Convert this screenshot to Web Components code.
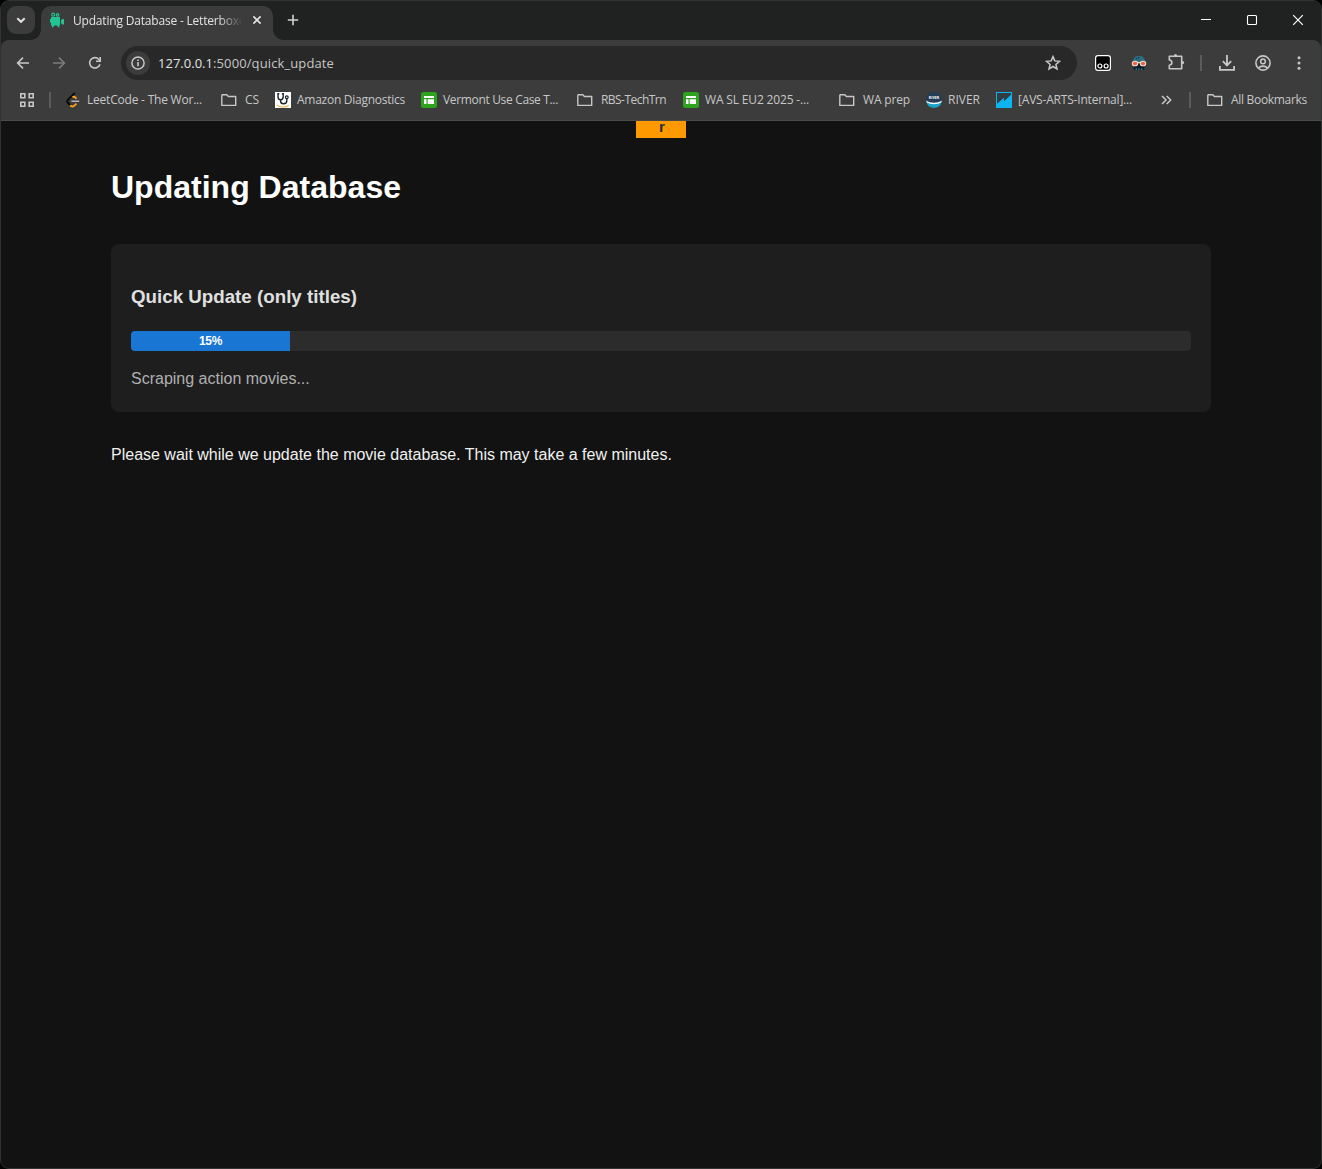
<!DOCTYPE html>
<html lang="en">
<head>
<meta charset="utf-8">
<title>Updating Database - Letterboxd</title>
<style>
html,body{margin:0;height:100%;background:#000;overflow:hidden}
</style>
</head>
<body>
<browser-window>
  <tab-strip slot="chrome"></tab-strip>
  <nav-bar slot="chrome"></nav-bar>
  <bookmarks-bar slot="chrome"></bookmarks-bar>
  <update-page></update-page>
</browser-window>
<script>
const svg=(w,h,vb,body)=>`<svg width="${w}" height="${h}" viewBox="${vb}" fill="none" style="display:block">${body}</svg>`;
const s16=b=>svg(16,16,'0 0 16 16',b);
const sheet='<rect width="16" height="16" rx="2.5" fill="#2da31e"/><path d="M3 4h10v2H3zM3 7.3h2.5V12H3zM6.7 7.3H13V12H6.7z" fill="#fff"/>';
const ICONS={
 chevron:s16('<path d="M4.3 6.2 8 9.8l3.7-3.6" stroke="#e3e3e3" stroke-width="1.9"/>'),
 camera:s16('<circle cx="4.200" cy="2.700" r="1.500" stroke="#22c493" stroke-width="1.200"/><circle cx="8.600" cy="2.900" r="1.200" stroke="#22c493" stroke-width="1.200"/><path d="M2 5h9v8.500H2zM3.500 13h1.800l-.8 2.300H2.700zM8 13h1.600l1 2.300H8.800zM1 7h1.500v3.500H1z" fill="#22c493"/><path d="m12 8.300 1.500-1.300H15v5.500h-1.500L12 11z" fill="#22c493"/>'),
 close:s16('<path d="m4.4 4.4 7.2 7.2M11.6 4.4l-7.2 7.2" stroke="#e3e3e3" stroke-width="1.6"/>'),
 plus:s16('<path d="M8 2.8v10.4M2.8 8h10.4" stroke="#d2d2d2" stroke-width="1.6"/>'),
 min:s16('<path d="M3 7.5h10" stroke="#fff"/>'),
 max:s16('<rect x="3.5" y="3.5" width="9" height="9" rx="1" stroke="#fff" stroke-width="1.1"/>'),
 winclose:s16('<path d="m3.2 3.2 9.6 9.6M12.8 3.2l-9.6 9.6" stroke="#fff" stroke-width="1.2"/>'),
 back:s16('<path d="M14 8H3M8 2.6 2.6 8 8 13.4" stroke="#c7c7c7" stroke-width="1.6"/>'),
 forward:s16('<path d="M2 8h11M8 2.6 13.4 8 8 13.4" stroke="#7c7c7c" stroke-width="1.6"/>'),
 reload:s16('<path d="M12.9 9.2A5.2 5.2 0 1 1 11.7 4.3L13.2 5.8" stroke="#c7c7c7" stroke-width="1.6"/><path d="M14 2v5H9V5.400h3.400V2z" fill="#c7c7c7"/>'),
 info:s16('<circle cx="8" cy="8" r="6.1" stroke="#c7c7c7" stroke-width="1.5"/><path d="M7.2 7.1h1.6v4.2H7.2zM7.2 4.4h1.6V6H7.2z" fill="#c7c7c7"/>'),
 star:s16('<path d="m8 1.6 1.8 4.3 4.7.4-3.6 3.1 1.1 4.6L8 11.5 4 14l1.1-4.6-3.6-3.1 4.7-.4z" stroke="#c7c7c7" stroke-width="1.5"/>'),
 tamper:s16('<rect x=".6" y=".6" width="14.8" height="14.8" rx="2.4" fill="#000" stroke="#fff" stroke-width="1.2"/><circle cx="4.9" cy="11" r="2" stroke="#fff" stroke-width="1.2"/><circle cx="11.1" cy="11" r="2" stroke="#fff" stroke-width="1.2"/>'),
 goggles:s16('<path d="M1.500 8.500C1.500 4 4 .8 8 .8s6.500 3.200 6.500 7.700z" fill="#2c6f82"/><path d="M7 2.2h1.4v1H7zM5 3h1v1H5z" fill="#122a35"/><path d="M2.2 9h11.600l-.8 6H3z" fill="#101d27"/><path d="M4.500 13.300h1.500V15H4.500zM7.200 13.300h1.500V15H7.200zM10 13.300h1.500V15H10z" fill="#257186"/><ellipse cx="4" cy="8.500" rx="2.700" ry="2.300" fill="#e8623f" stroke="#f5d9cf" stroke-width="1.100"/><ellipse cx="12" cy="8.500" rx="2.700" ry="2.300" fill="#e8623f" stroke="#f5d9cf" stroke-width="1.100"/><path d="M6.500 7.100h3v1h-3z" fill="#f5d9cf"/>'),
 puzzle:svg(18,18,'0 0 18 18','<path d="M2.3 3.3h12.4v12.4H2.3v-3.5c1.6-.1 2.6-1 2.6-2.6s-1-2.5-2.6-2.6z" stroke="#c7c7c7" stroke-width="1.6" stroke-linejoin="round"/><path d="M7 3V2.4a1.5 1.5 0 0 1 3 0V3zM15 7.9h.6a1.6 1.6 0 0 1 0 3.2H15z" fill="#c7c7c7"/>'),
 download:s16('<path d="M8 0v9.800M3.800 6.200 8 10.400l4.200-4.200M.9 11v3.900h14.200V11" stroke="#c7c7c7" stroke-width="1.800"/>'),
 profile:s16('<circle cx="8" cy="8" r="7.1" stroke="#c7c7c7" stroke-width="1.6"/><circle cx="8" cy="6.4" r="2.3" stroke="#c7c7c7" stroke-width="1.5"/><path d="M3.4 13.1c2.5-2.6 6.7-2.6 9.2 0" stroke="#c7c7c7" stroke-width="1.6"/>'),
 dots:s16('<circle cx="8" cy="2.8" r="1.5" fill="#c7c7c7"/><circle cx="8" cy="8" r="1.5" fill="#c7c7c7"/><circle cx="8" cy="13.2" r="1.5" fill="#c7c7c7"/>'),
 grid:s16('<path d="M1.8 1.8h4v4h-4zM10.2 1.8h4v4h-4zM1.8 10.2h4v4h-4zM10.2 10.2h4v4h-4z" stroke="#c7c7c7" stroke-width="1.6"/>'),
 leet:s16('<path d="M9.8 1 3 7.6c-1 1-1 2.2 0 3.2l1 1" stroke="#080808" stroke-width="1.9"/><path d="M7.500 5.200c1-.6 2-.4 2.900.3l1.100 1.100M5 13.200c1.500 1.400 3.500 1.400 4.900 0l1.600-1.600" stroke="#f6a01b" stroke-width="1.900"/><path d="m3.200 11 2 2.200" stroke="#080808" stroke-width="1.900"/><path d="M6.4 9.2h7.8" stroke="#b3b3b3" stroke-width="1.6"/>'),
 folder:s16('<path d="M1.3 2.8h4.5l1.6 1.7h7.3v8.9H.8V3.3z" stroke="#c7c7c7" stroke-width="1.4" stroke-linejoin="round"/>'),
 steth:s16('<path fill="#fff" d="M0 0h16v16H0z"/><path d="M4.300 1.700H3v2.800c0 2 1.100 3.200 2.600 3.200s2.600-1.200 2.600-3.200V1.700H6.900M5.600 7.700v1.200c0 1.900 1.100 2.800 2.900 2.800s3.300-1 3.300-3V6.500" stroke="#1b232d" stroke-width="1.400"/><circle cx="11.8" cy="5.200" r="1.400" stroke="#1b232d" stroke-width="1.200"/><path d="M1.800 13.300c3.500 2 8.500 2 12 .1" stroke="#efb75b" stroke-width="1.200"/>'),
 sheet:s16(sheet),
 river:s16('<circle cx="8" cy="8" r="8" fill="#233d56"/><path d="M.1 8.600c4.500 3 11.300 3 15.800 0A8 8 0 0 1 .1 8.600z" fill="#fff"/><path d="M.4 10.200c4.400 2.600 10.800 2.600 15.200 0A8 8 0 0 1 .4 10.200z" fill="#18a4c8"/><text x="8" y="6.800" fill="#fff" font-family="Open Sans" font-size="3.600" font-weight="700" text-anchor="middle">RIVER</text>'),
 avs:s16('<path fill="#0eb4f2" d="M0 0h16v16H0z"/><path d="M1 1h14v1.700L8 9.300V5.800L1 11.700z" fill="#333c40"/>'),
 more:s16('<path d="m4 4 4 4-4 4M8.700 4l4 4-4 4" stroke="#c7c7c7" stroke-width="1.500"/>')
};
const define=(name,html,ready)=>customElements.define(name,class extends HTMLElement{
  connectedCallback(){
    if(!this.shadowRoot)this.attachShadow({mode:'open'});
    this.shadowRoot.innerHTML=typeof html==='function'?html(this):html;
    if(ready)ready(this,this.shadowRoot);
  }
});
define('ui-icon',e=>`<style>:host{display:block;flex:none}</style>${ICONS[e.getAttribute('name')]}`);
/* A label spaced to fill the width given in its w attribute. */
define('fit-label',e=>`<style>:host{display:block;flex:none;white-space:pre;width:${e.getAttribute('w')}px}span{display:inline-block}</style><span>${e.getAttribute('text')}</span>`,(e,r)=>{
  const s=r.querySelector('span'),n=s.textContent.length;
  s.style.letterSpacing=((+e.getAttribute('w')-s.getBoundingClientRect().width)/n)+'px';
});
define('browser-window',`<style>:host{display:flex;flex-direction:column;box-sizing:border-box;width:1322px;height:1169px;border:1px solid #303332;border-radius:9px;background:#121212;overflow:hidden}
header{background:#202221}</style><header><slot name="chrome"></slot></header><slot></slot>`);
define('tab-strip',`<style>:host{display:flex;height:39px;background:#202221;font:12px/16px "Open Sans",sans-serif;color:#e3e3e3}
.search{display:flex;align-items:center;justify-content:center;width:28px;height:28px;margin:5px 0 0 6px;border-radius:9px;background:#3c3c3c}
.tab{position:relative;display:flex;align-items:center;box-sizing:border-box;width:232px;height:34px;margin:5px 0 0 6px;padding:0 8px 6px;border-radius:10px 10px 0 0;background:#3c3c3c}
.tab:before,.tab:after{content:"";position:absolute;bottom:0;width:10px;height:10px}
.tab:before{left:-10px;background:radial-gradient(circle at 0 0,transparent 9.500px,#3c3c3c 10px)}
.tab:after{right:-10px;background:radial-gradient(circle at 100% 0,transparent 9.500px,#3c3c3c 10px)}
.title{width:168px;margin-left:8px;padding-top:2px;overflow:hidden;-webkit-mask:linear-gradient(90deg,#000 145px,transparent 170px)}
.x{margin-left:8px}.new{margin:11px 0 0 12px}.controls{display:flex;gap:30px;margin:11px 15px 0 auto}</style>
<div class="search"><ui-icon name="chevron"></ui-icon></div>
<div class="tab"><ui-icon name="camera"></ui-icon><div class="title"><fit-label w="173" text="Updating Database - Letterboxd"></fit-label></div><ui-icon class="x" name="close"></ui-icon></div>
<ui-icon class="new" name="plus"></ui-icon>
<div class="controls"><ui-icon name="min"></ui-icon><ui-icon name="max"></ui-icon><ui-icon name="winclose"></ui-icon></div>`);
define('nav-bar',`<style>:host{display:flex;align-items:center;box-sizing:border-box;height:41px;padding:5px 14px 1px;background:#3c3c3c;border-radius:8px 8px 0 0;font:13px/18px "Open Sans",sans-serif;color:#e3e3e3}
.nav{display:flex;gap:20px}
.omni{display:flex;align-items:center;box-sizing:border-box;width:956px;height:34px;margin-left:18px;padding:0 16px 0 5px;border-radius:17px;background:#282828}
.site{display:flex;align-items:center;justify-content:center;width:24px;height:24px;border-radius:12px;background:#3c3c3c;margin-right:8px}
.path{color:#c7c7c7}.omni .star{margin-left:auto}
.ext{display:flex;gap:20px;margin-left:18px}.ext .p{margin:-2px 0 0 0}
i{width:2px;height:16px;margin:0 16px 0 15px;background:#5b5b5b}.right{display:flex;gap:20px;margin-left:1px}</style>
<div class="nav"><ui-icon name="back"></ui-icon><ui-icon name="forward"></ui-icon><ui-icon name="reload"></ui-icon></div>
<div class="omni"><div class="site"><ui-icon name="info"></ui-icon></div><fit-label w="55" text="127.0.0.1"></fit-label><fit-label class="path" w="121" text=":5000/quick_update"></fit-label><ui-icon class="star" name="star"></ui-icon></div>
<div class="ext"><ui-icon name="tamper"></ui-icon><ui-icon name="goggles"></ui-icon><ui-icon class="p" name="puzzle"></ui-icon></div><i></i>
<div class="right"><ui-icon name="download"></ui-icon><ui-icon name="profile"></ui-icon><ui-icon name="dots"></ui-icon></div>`);
define('bookmark-item',e=>`<style>:host{display:flex;align-items:center;flex:none}fit-label{margin-left:${e.getAttribute('icon')==='folder'?8:6}px}</style><ui-icon name="${e.getAttribute('icon')}"></ui-icon><fit-label w="${e.getAttribute('w')}" text="${e.getAttribute('label')}"></fit-label>`);
const marks=[['leet','LeetCode - The Wor...',115,14],['folder','CS',14,19],['steth','Amazon Diagnostics',108,16],['sheet','Vermont Use Case T...',115,16],['folder','RBS-TechTrn',65,19],['sheet','WA SL EU2 2025 -...',104,17],['folder','WA prep',47,30],['river','RIVER',32,16],['avs','[AVS-ARTS-Internal]...',114,16]];
define('bookmarks-bar',`<style>:host{display:flex;align-items:center;box-sizing:border-box;height:40px;padding:0 0 1px 18px;background:#3c3c3c;border-bottom:1px solid #494b4a;font:12px/16px "Open Sans",sans-serif;color:#c7c7c7}
i{flex:none;width:2px;height:16px;margin-left:14px;background:#5b5b5b}.more{margin-left:26px}.s2{margin-left:15px}</style>
<ui-icon name="grid"></ui-icon><i></i>
${marks.map(m=>`<bookmark-item icon="${m[0]}" label="${m[1]}" w="${m[2]}" style="margin-left:${m[3]}px"></bookmark-item>`).join('')}
<ui-icon class="more" name="more"></ui-icon><i class="s2"></i><bookmark-item icon="folder" label="All Bookmarks" w="76" style="margin-left:16px"></bookmark-item>`);
define('progress-bar',e=>`<style>:host{display:block;height:20px;border-radius:4px;background:#2c2c2c;overflow:hidden}div{width:${e.getAttribute('value')}%;height:20px;background:#1976d2;color:#fff;font:bold 12px/20px "Liberation Sans",Arial,sans-serif;letter-spacing:-.3px;text-align:center}</style><div>${e.getAttribute('value')}%</div>`);
define('update-card',`<style>:host{display:block;box-sizing:border-box;height:168px;padding:41px 20px 0;border-radius:8px;background:#1e1e1e}
h3{margin:0;font-size:18.720px;line-height:24px;color:#e0e0e0}progress-bar{margin-top:22px}p{margin:18px 0 0;line-height:20px;color:#b0b0b0}</style>
<h3><fit-label w="226" text="Quick Update (only titles)"></fit-label></h3><progress-bar value="15"></progress-bar><p>Scraping action movies...</p>`);
define('update-page',`<style>:host{display:block;position:relative;flex:1;font:16px/20px "Liberation Sans",Arial,sans-serif;color:#e0e0e0}
main{width:1100px;margin:0 auto;padding-top:47px}h1{margin:0 0 37px;font-size:32px;line-height:39px;color:#fff}
p{margin:33px 0 0;color:#f0f0f0}
.badge{position:absolute;left:635px;top:0;width:50px;height:17px;background:#ff9900;color:#232f3e;font:bold 15px/11px "Liberation Sans",Arial,sans-serif;text-align:center;text-indent:2px}</style>
<div class="badge">r</div>
<main><h1><fit-label w="290" text="Updating Database"></fit-label></h1><update-card></update-card><p>Please wait while we update the movie database. This may take a few minutes.</p></main>`);
</script>
</body>
</html>
